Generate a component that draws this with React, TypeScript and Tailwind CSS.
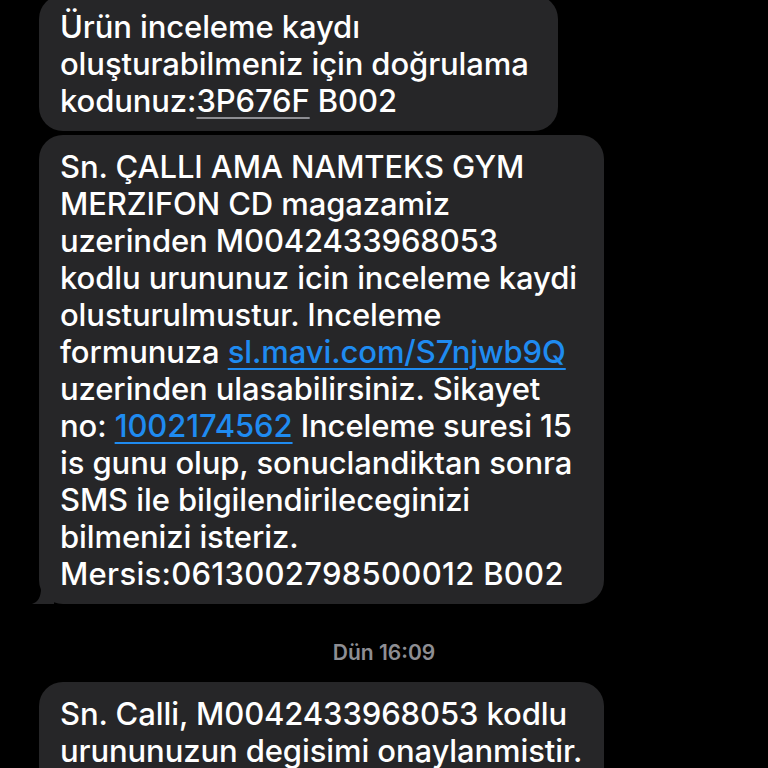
import React from 'react'

const font = { fontFamily: 'Inter, "Noto Sans", "Liberation Sans", sans-serif' }

function Tail() {
  return (
    <svg className="absolute left-[-9px] bottom-0" width="24" height="22" viewBox="0 0 24 22">
      <path d="M24 0 L24 22 L2 22 C8 20 11 15 11 6 L11 0 Z" fill="#262628" />
    </svg>
  )
}

function Bubble({ lines, width, tail, className = '' }: { lines: React.ReactNode[]; width: string; tail?: boolean; className?: string }) {
  return (
    <div className={`relative ml-[39px] rounded-[24px] bg-[#262628] pl-[21px] pr-4 pt-[13px] pb-[12px] ${width} ${className}`}>
      {tail && <Tail />}
      {lines.map((l, i) => (
        <div key={i} className="whitespace-nowrap text-[31px] leading-[37px] font-medium text-white tracking-[-0.1px]">{l}</div>
      ))}
    </div>
  )
}

const link = 'text-[#1f8bf0] underline decoration-[2px] underline-offset-[5px]'

export default function App() {
  const first = [
    'Ürün inceleme kaydı',
    'oluşturabilmeniz için doğrulama',
    <>kodunuz:<span className="underline decoration-[#8e8e93] decoration-[2px] underline-offset-[5px]">3P676F</span> B002</>,
  ]
  const second = [
    'Sn. ÇALLI AMA NAMTEKS GYM',
    'MERZIFON CD magazamiz',
    'uzerinden M0042433968053',
    'kodlu urununuz icin inceleme kaydi',
    'olusturulmustur. Inceleme',
    <>formunuza <span className={link}>sl.mavi.com/S7njwb9Q</span></>,
    'uzerinden ulasabilirsiniz. Sikayet',
    <>no: <span className={link}>1002174562</span> Inceleme suresi 15</>,
    'is gunu olup, sonuclandiktan sonra',
    'SMS ile bilgilendirileceginizi',
    'bilmenizi isteriz.',
    <span className="tracking-[0.3px]">Mersis:0613002798500012 B002</span>,
  ]
  const third = [
    'Sn. Calli, M0042433968053 kodlu',
    'urununuzun degisimi onaylanmistir.',
  ]
  return (
    <div className="h-[768px] w-[768px] overflow-hidden bg-black" style={font}>
      <div className="flex flex-col -mt-[5px]">
        <Bubble lines={first} width="w-[519px]" />
        <Bubble lines={second} width="w-[565px]" tail className="mt-[4px]" />
        <div className="mt-[37px] mb-[17px] text-center text-[21px] leading-[24px] font-semibold text-[#8e8e93]">
          Dün 16:09
        </div>
        <Bubble lines={third} width="w-[565px]" className="pb-[60px]" />
      </div>
    </div>
  )
}
